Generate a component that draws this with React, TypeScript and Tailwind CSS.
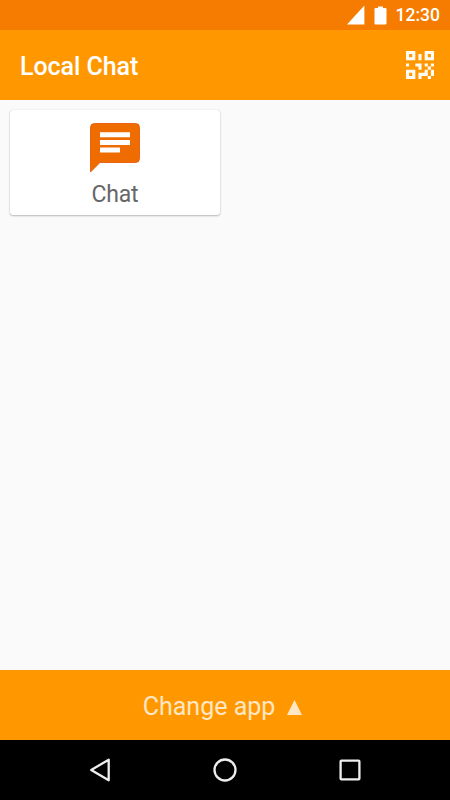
import type { ReactNode } from 'react';

function QrIcon() {
  return (
    <svg viewBox="3 3 18 18" className="h-7 w-7" fill="#fff" opacity=".97">
      <path d="M3,11H5V13H3V11M11,5H13V9H11V5M9,11H13V15H11V13H9V11M15,11H17V13H19V11H21V13H19V15H21V19H19V21H17V19H13V21H11V17H15V15H17V13H15V11M19,19V15H17V19H19M15,3H21V9H15V3M17,5V7H19V5H17M3,3H9V9H3V3M5,5V7H7V5H5M3,15H9V21H3V15M5,17V19H7V17H5Z" />
    </svg>
  );
}

function StatusBar() {
  return (
    <div className="flex h-[30px] items-center justify-end bg-[#f57c00] pr-[10px] text-white">
      <svg viewBox="0 0 18 20" className="mr-[9px] h-5 w-[18px]" fill="currentColor">
        <path d="M17.4 .5V19.5H0z" />
      </svg>
      <svg viewBox="0 0 13 19" className="mr-[9px] h-[19px] w-[13px]" fill="currentColor">
        <path d="M4 .5h5v1.5h2.5q1 0 1 1v14.5q0 1-1 1h-10q-1 0-1-1V3q0-1 1-1H4z" />
      </svg>
      <span className="pt-px text-[17.5px] leading-none font-medium">12:30</span>
    </div>
  );
}

function NavButton({ label, children }: { label: string; children: ReactNode }) {
  return (
    <button aria-label={label} className="flex w-[125px] items-center justify-center">
      <svg viewBox="0 0 30 30" className="size-[30px]" fill="none" stroke="#eee" strokeWidth="2.3" strokeLinejoin="round">
        {children}
      </svg>
    </button>
  );
}

export default function App() {
  return (
    <div className="flex h-[800px] w-[450px] flex-col overflow-hidden bg-[#fafafa] font-['Roboto',sans-serif]">
      <StatusBar />

      <header className="flex h-[70px] items-center justify-between bg-[#ff9800] pr-4 pl-5 text-white">
        <h1 className="pt-[2px] text-[25px] leading-none font-medium tracking-[-0.06px]">Local Chat</h1>
        <button aria-label="QR">
          <QrIcon />
        </button>
      </header>

      <main className="flex-1 p-[10px]">
        <div className="flex h-[105px] w-[210px] flex-col items-center rounded-[3px] bg-white pt-[13px] shadow-[0_1px_2px_rgba(0,0,0,0.25),0_0_1px_rgba(0,0,0,0.2)]">
          <svg viewBox="0 0 50 50" className="size-[50px]">
            <path d="M4.5.5h41q4 0 4 4v31q0 4-4 4H10L.5 49V4.5q0-4 4-4z" fill="#ef6c00" stroke="#e65100" strokeWidth=".8" />
            <path d="M10 9.3h30v5H10zM10 17h30v5H10zM10 24.5h20v5H10z" fill="#fff" />
          </svg>
          <span className="mt-[10px] text-[23px] leading-none tracking-[-0.2px] text-[#666]">Chat</span>
        </div>
      </main>

      <button className="flex h-[70px] items-center justify-center bg-[#ff9800] pt-[2px] pr-[5px] text-[25px] leading-none text-[#ffe6c4]">
        <span>Change app</span>
        <svg viewBox="0 0 15 15" className="mt-[2px] ml-[12px] size-[15px]" fill="currentColor">
          <path d="M7.5 0L15 15H0z" />
        </svg>
      </button>

      <nav className="flex h-[60px] items-center justify-center bg-black">
        <NavButton label="Back">
          <path d="M23.7 4.7v20.6L6.2 15z" />
        </NavButton>
        <NavButton label="Home">
          <circle cx="15" cy="15" r="10.5" />
        </NavButton>
        <NavButton label="Recents">
          <rect x="5.6" y="5.6" width="18.8" height="18.8" rx=".8" />
        </NavButton>
      </nav>
    </div>
  );
}
